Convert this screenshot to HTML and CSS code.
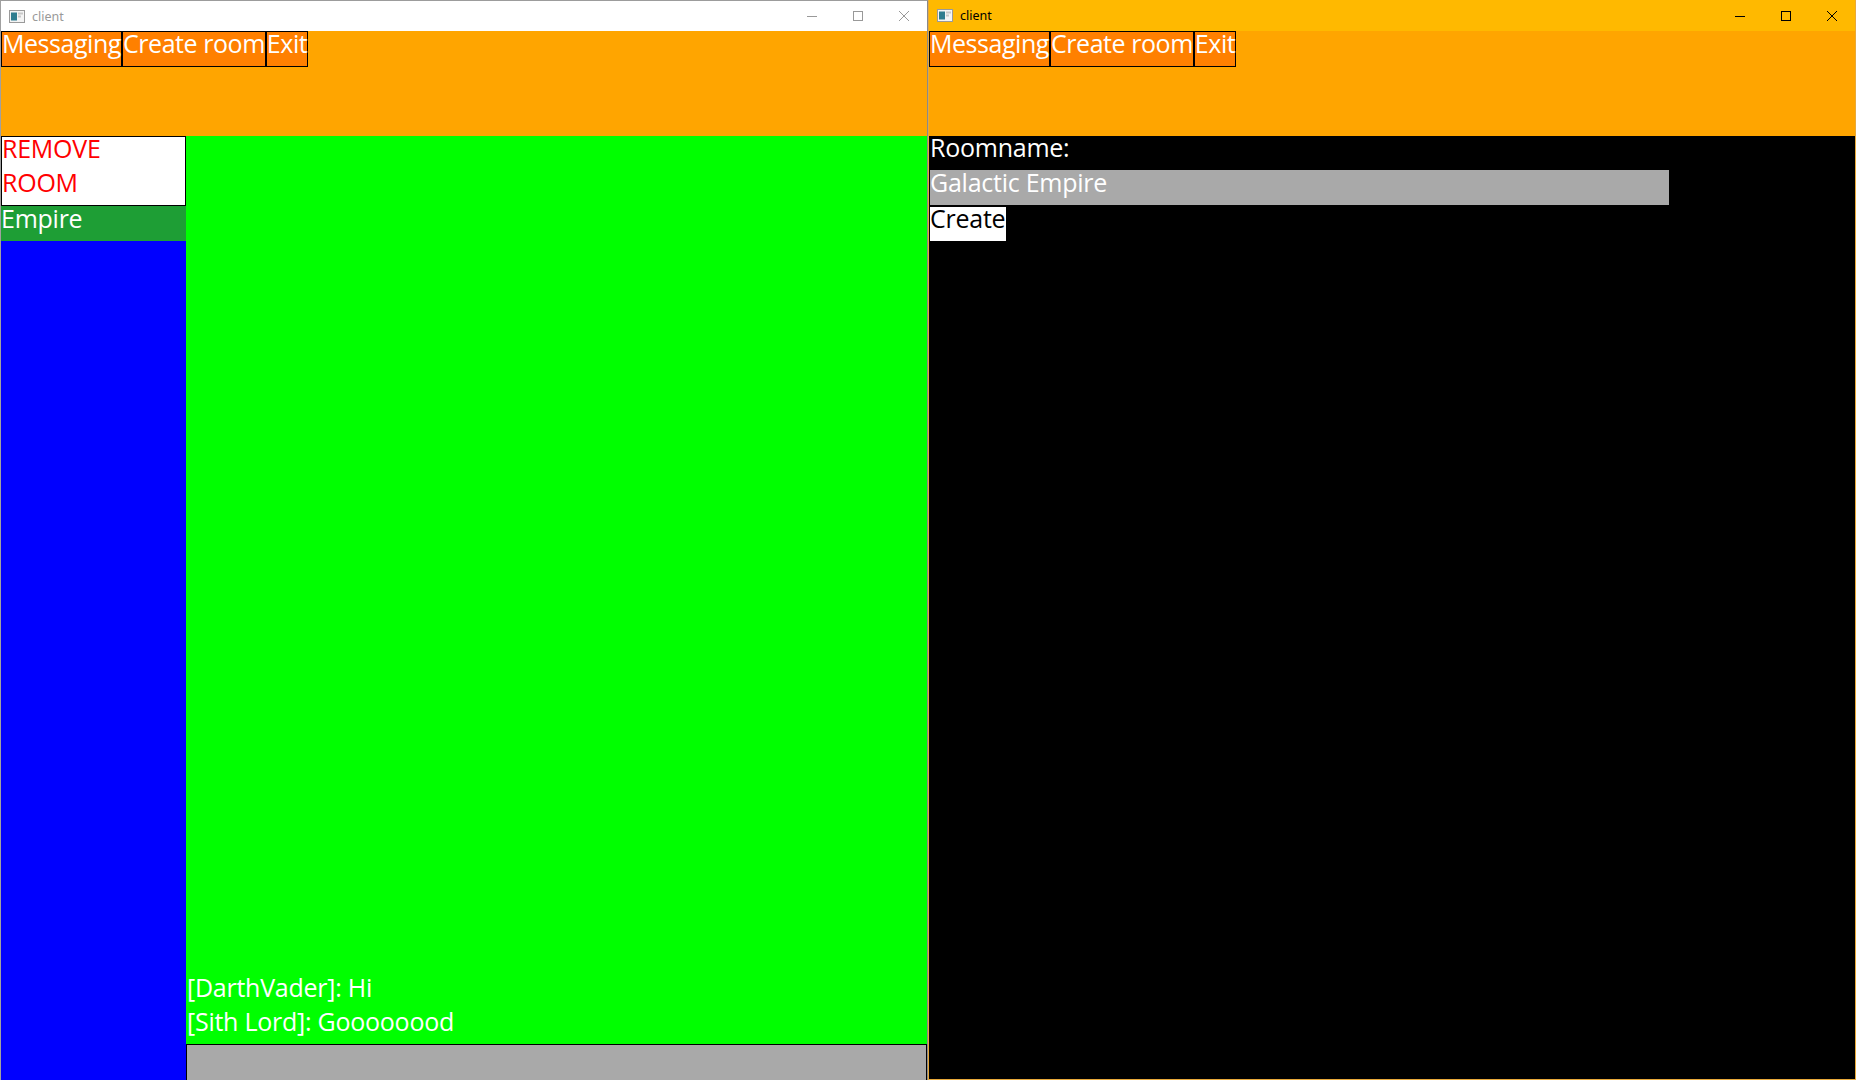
FILE: index.html
```html
<!DOCTYPE html>
<html>
<head>
<meta charset="utf-8">
<title>client</title>
<link rel="stylesheet" href="styles.css">
</head>
<body>
<div class="desktop">
  <div class="window inactive">
    <div class="titlebar">
      <svg class="app-icon" width="16" height="13" viewBox="0 0 16 13"><rect x="0.5" y="0.5" width="15" height="12" fill="#f4f4f4" stroke="#9a9a9a"/><rect x="2" y="2.5" width="6" height="8" fill="#2f7d8f"/><rect x="9" y="2.5" width="5" height="2" fill="#c8c8c8"/><rect x="9" y="5.5" width="3" height="2" fill="#c8c8c8"/></svg>
      <span class="title">client</span>
      <div class="caption">
        <span class="cap-btn"><svg width="10" height="10" viewBox="0 0 10 10"><line x1="0" y1="5.5" x2="10" y2="5.5" stroke="currentColor"/></svg></span>
        <span class="cap-btn"><svg width="10" height="10" viewBox="0 0 10 10"><rect x="0.5" y="0.5" width="9" height="9" fill="none" stroke="currentColor"/></svg></span>
        <span class="cap-btn"><svg width="10" height="10" viewBox="0 0 10 10"><path d="M0 0L10 10M10 0L0 10" stroke="currentColor"/></svg></span>
      </div>
    </div>
    <div class="header">
      <div class="menu">
        <span class="menu-btn">Messaging</span><span class="menu-btn">Create room</span><span class="menu-btn">Exit</span>
      </div>
    </div>
    <div class="messaging">
      <div class="rooms">
        <div class="remove-room"><span class="ln">REMOVE</span><span class="ln">ROOM</span></div>
        <div class="room selected">Empire</div>
      </div>
      <div class="chat">
        <div class="messages">
          <div class="msg">[DarthVader]: Hi</div>
          <div class="msg">[Sith Lord]: Goooooood</div>
        </div>
        <div class="chat-input"></div>
      </div>
    </div>
  </div>
  <div class="window active">
    <div class="titlebar">
      <svg class="app-icon" width="16" height="13" viewBox="0 0 16 13"><rect x="0.5" y="0.5" width="15" height="12" fill="#f4f4f4" stroke="#9a9a9a"/><rect x="2" y="2.5" width="6" height="8" fill="#2f7d8f"/><rect x="9" y="2.5" width="5" height="2" fill="#c8c8c8"/><rect x="9" y="5.5" width="3" height="2" fill="#c8c8c8"/></svg>
      <span class="title">client</span>
      <div class="caption">
        <span class="cap-btn"><svg width="10" height="10" viewBox="0 0 10 10"><line x1="0" y1="5.5" x2="10" y2="5.5" stroke="currentColor"/></svg></span>
        <span class="cap-btn"><svg width="10" height="10" viewBox="0 0 10 10"><rect x="0.5" y="0.5" width="9" height="9" fill="none" stroke="currentColor"/></svg></span>
        <span class="cap-btn"><svg width="10" height="10" viewBox="0 0 10 10"><path d="M0 0L10 10M10 0L0 10" stroke="currentColor"/></svg></span>
      </div>
    </div>
    <div class="header">
      <div class="menu">
        <span class="menu-btn">Messaging</span><span class="menu-btn">Create room</span><span class="menu-btn">Exit</span>
      </div>
    </div>
    <div class="create-room">
      <div class="label">Roomname:</div>
      <div class="room-input">Galactic Empire</div>
      <div class="create-btn">Create</div>
    </div>
  </div>
</div>
</body>
</html>
```
FILE: styles.css
```css
* { box-sizing: border-box; }
html, body { margin: 0; padding: 0; }
body {
  width: 1856px;
  height: 1080px;
  overflow: hidden;
  font-family: "Open Sans", "Noto Sans", sans-serif;
  background: #000;
}
.desktop {
  display: flex;
  width: 1856px;
  height: 1080px;
}
.window {
  width: 928px;
  height: 1080px;
  display: flex;
  flex-direction: column;
}
.window.inactive {
  border-top: 1px solid #9c9c9c;
  border-left: 1px solid #a0a0a0;
  border-right: 1px solid #8a8a8a;
  background: #fff;
}
.window.active {
  border-left: 1px solid #e8a93a;
  border-right: 1px solid #e8a93a;
  border-bottom: 1px solid #e8a93a;
  background: #ffb900;
}
.titlebar {
  height: 30px;
  flex: none;
  display: flex;
  align-items: center;
  font-family: "Noto Sans", "Open Sans", sans-serif;
  font-size: 12.5px;
}
.window.active .titlebar { height: 31px; }
.inactive .titlebar { background: #fff; color: #999; }
.active .titlebar { background: #ffb900; color: #000; }
.app-icon { margin-left: 8px; margin-right: 7px; flex: none; }
.title { flex: 1; }
.caption { display: flex; height: 100%; }
.cap-btn {
  width: 46px;
  height: 100%;
  display: flex;
  align-items: center;
  justify-content: center;
}
.inactive .cap-btn { color: #999; }
.active .cap-btn { color: #000; }

/* text line: 34px tall with the baseline high, as the source app draws it */
.menu-btn, .room, .msg, .label, .room-input, .create-btn, .ln {
  font-size: 25px;
  letter-spacing: -0.25px;
  line-height: 23px;
  padding-bottom: 11px;
  white-space: nowrap;
}
.header {
  height: 105px;
  flex: none;
  background: #ffa500;
}
.menu { display: flex; align-items: flex-start; }
.menu-btn {
  background: #ff8000;
  border: 1px solid #000;
  color: #fff;
  height: 36px;
  padding-left: 0;
  padding-right: 0;
  letter-spacing: -0.45px;
}
.messaging {
  flex: 1;
  display: flex;
  min-height: 0;
}
.rooms {
  width: 185px;
  flex: none;
  background: #0000ff;
  display: flex;
  flex-direction: column;
}
.remove-room {
  background: #fff;
  border: 1px solid #000;
  color: #ff0000;
  height: 70px;
  display: flex;
  flex-direction: column;
}
.ln {
  display: block;
  height: 34px;
}
.room {
  height: 35px;
  color: #fff;
  padding-top: 1px;
}
.room.selected { background: #1e9e35; }
.chat {
  flex: 1;
  background: #00ff00;
  display: flex;
  flex-direction: column;
  justify-content: flex-end;
}
.msg {
  color: #fff;
  height: 34px;
  padding-left: 1px;
}
.chat-input {
  height: 36px;
  background: #a9a9a9;
  border: 1px solid #000;
  border-bottom: none;
}
.create-room {
  flex: 1;
  background: #000;
  padding-left: 1px;
  display: flex;
  flex-direction: column;
  align-items: flex-start;
}
.label {
  color: #fff;
  height: 34px;
}
.room-input {
  width: 739px;
  height: 35px;
  background: #a9a9a9;
  color: #fff;
  padding-top: 1px;
}
.create-btn {
  margin-top: 2px;
  background: #fff;
  color: #000;
  height: 34px;
  padding-right: 1px;
}
```
